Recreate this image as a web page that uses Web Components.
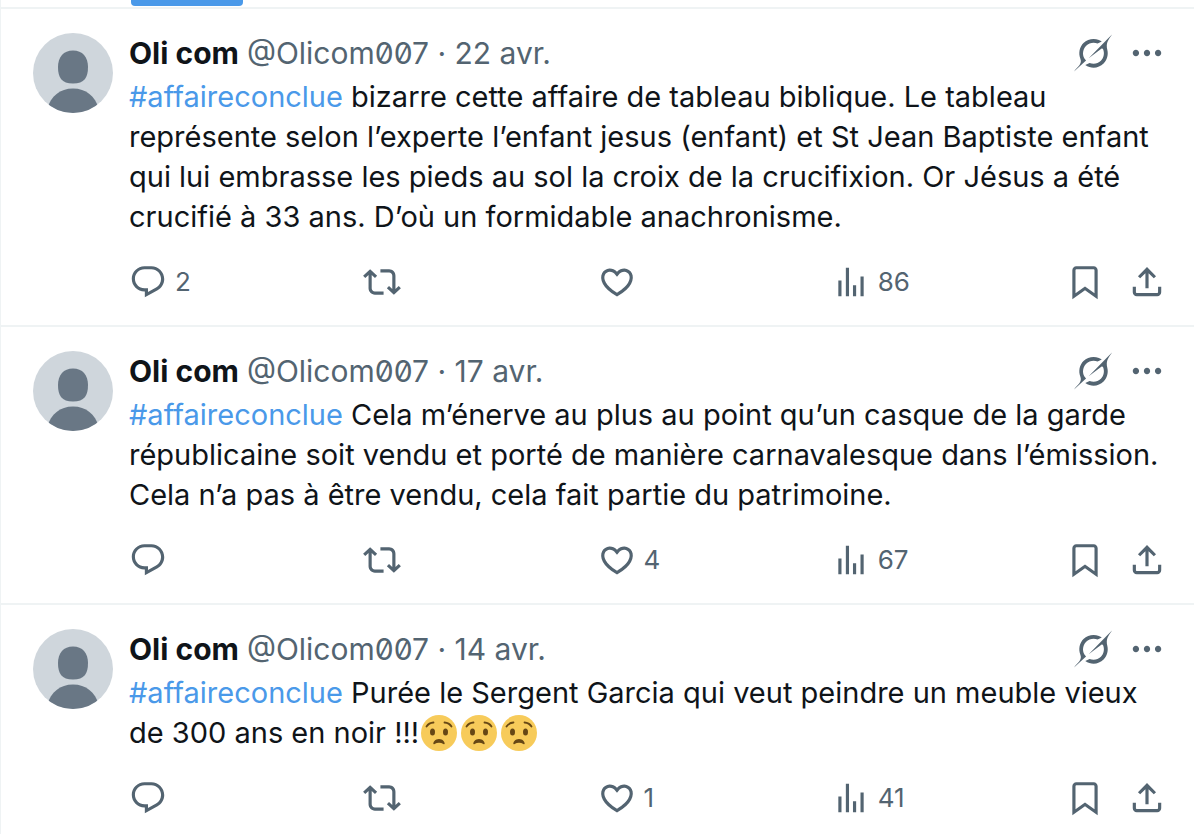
<!DOCTYPE html>
<html lang="fr">
<head>
<meta charset="utf-8">
<meta name="viewport" content="width=device-width, initial-scale=1">
<title>#affaireconclue</title>
<style>
  body {
    margin: 0;
    background: #fff;
    color: #0f1419;
    font-family: Inter, "Noto Sans", sans-serif;
    overflow: hidden;
  }
</style>
</head>
<body>
<post-timeline>
  <post-item name="Oli com" handle="Olicom007" date="22 avr." replies="2" views="86">
    <hash-tag tag="affaireconclue"></hash-tag> bizarre cette affaire de tableau biblique. Le tableau représente selon l’experte l’enfant jesus (enfant) et St Jean Baptiste enfant qui lui embrasse les pieds au sol la croix de la crucifixion. Or Jésus a été crucifié à 33 ans. D’où un formidable anachronisme.
  </post-item>
  <post-item name="Oli com" handle="Olicom007" date="17 avr." likes="4" views="67">
    <hash-tag tag="affaireconclue"></hash-tag> Cela m’énerve au plus au point qu’un casque de la garde républicaine soit vendu et porté de manière carnavalesque dans l’émission. Cela n’a pas à être vendu, cela fait partie du patrimoine.
  </post-item>
  <post-item name="Oli com" handle="Olicom007" date="14 avr." likes="1" views="41">
    <hash-tag tag="affaireconclue"></hash-tag> Purée le Sergent Garcia qui veut peindre un meuble vieux de 300 ans en noir !!!<worried-face></worried-face><worried-face></worried-face><worried-face></worried-face>
  </post-item>
</post-timeline>

<script>
const ICONS = {
  reply: 'M1.751 10c0-4.42 3.584-8 8.005-8h4.366c4.49 0 8.129 3.64 8.129 8.13 0 2.96-1.607 5.68-4.196 7.11l-8.054 4.46v-3.69h-.067c-4.49.1-8.183-3.51-8.183-8.01zm8.005-6c-3.317 0-6.005 2.69-6.005 6 0 3.37 2.77 6.08 6.138 6.01l.351-.01h1.761v2.3l5.087-2.81c1.951-1.08 3.163-3.13 3.163-5.36 0-3.39-2.744-6.13-6.129-6.13H9.756z',
  repost: 'M4.5 3.88l4.432 4.14-1.364 1.46L5.5 7.55V16c0 1.1.896 2 2 2H13v2H7.5c-2.209 0-4-1.79-4-4V7.55L1.432 9.48.068 8.02 4.5 3.88zM16.5 6H11V4h5.5c2.209 0 4 1.79 4 4v8.45l2.068-1.93 1.364 1.46-4.432 4.14-4.432-4.14 1.364-1.46 2.068 1.93V8c0-1.1-.896-2-2-2z',
  like: 'M16.697 5.5c-1.222-.06-2.679.51-3.89 2.16l-.805 1.09-.806-1.09C9.984 6.01 8.526 5.44 7.304 5.5c-1.243.07-2.349.78-2.91 1.91-.552 1.12-.633 2.78.479 4.82 1.074 1.97 3.257 4.27 7.129 6.61 3.87-2.34 6.052-4.64 7.126-6.61 1.111-2.04 1.03-3.7.477-4.82-.561-1.13-1.666-1.84-2.908-1.91zm4.187 7.69c-1.351 2.48-4.001 5.12-8.379 7.67l-.503.3-.504-.3c-4.379-2.55-7.029-5.19-8.382-7.67-1.36-2.5-1.41-4.86-.514-6.67.887-1.79 2.647-2.91 4.601-3.01 1.651-.09 3.368.56 4.798 2.01 1.429-1.45 3.146-2.1 4.796-2.01 1.954.1 3.714 1.22 4.601 3.01.896 1.81.846 4.17-.514 6.67z',
  views: 'M8.75 21V3h2v18h-2zM18 21V8.5h2V21h-2zM4 21l.004-10h2L6 21H4zm9.248 0v-7h2v7h-2z',
  bookmark: 'M4 4.5C4 3.12 5.119 2 6.5 2h11C18.881 2 20 3.12 20 4.5v18.44l-8-5.71-8 5.71V4.5zM6.5 4c-.276 0-.5.22-.5.5v14.56l6-4.29 6 4.29V4.5c0-.28-.224-.5-.5-.5h-11z',
  share: 'M12 2.59l5.7 5.7-1.41 1.42L13 6.41V16h-2V6.41l-3.3 3.3-1.41-1.42L12 2.59zM21 15l-.02 3.51c0 1.38-1.12 2.49-2.5 2.49H5.5C4.11 21 3 19.88 3 18.5V15h2v3.5c0 .28.22.5.5.5h12.98c.28 0 .5-.22.5-.5L19 15h2z',
  more: 'M3 12c0-1.1.9-2 2-2s2 .9 2 2-.9 2-2 2-2-.9-2-2zm9 2c1.1 0 2-.9 2-2s-.9-2-2-2-2 .9-2 2 .9 2 2 2zm7 0c1.1 0 2-.9 2-2s-.9-2-2-2-2 .9-2 2 .9 2 2 2z',
  grok: 'M12.745 20.54l10.97-8.19c.539-.4 1.307-.244 1.564.38 1.349 3.288.746 7.241-1.938 9.955-2.683 2.714-6.417 3.31-9.83 1.954l-3.728 1.745c5.347 3.697 11.84 2.782 15.898-1.324 3.219-3.255 4.216-7.692 3.284-11.693l.008.009c-1.351-5.878.332-8.227 3.782-13.031L33 0l-4.54 4.59v-.014L12.743 20.544m-2.263 1.987c-3.837-3.707-3.175-9.446.1-12.755 2.42-2.449 6.388-3.448 9.852-1.979l3.72-1.737c-.67-.49-1.53-1.017-2.515-1.387-4.455-1.854-9.789-.931-13.41 2.728-3.483 3.523-4.579 8.94-2.697 13.561 1.405 3.454-.899 5.898-3.22 8.364C1.49 30.2.666 31.074 0 32l10.478-9.466'
};

// Button with an icon and an optional counter
class IconButton extends HTMLElement {
  constructor() {
    super();
    this.attachShadow({ mode: 'open' });
  }

  connectedCallback() {
    const icon = this.getAttribute('icon');
    const count = this.getAttribute('count') || '';
    const box = icon === 'grok' ? '0 0 33 32' : '0 0 24 24';

    this.shadowRoot.innerHTML = `
      <style>
        :host {
          display: block;
        }

        button {
          display: flex;
          align-items: center;
          gap: 8px;
          height: 40px;
          padding: 0;
          border: 0;
          background: none;
          color: #536471;
          font-family: inherit;
          font-size: 26px;
          line-height: 32px;
          cursor: pointer;
        }

        button:hover {
          color: #1d9bf0;
        }

        svg {
          display: block;
          width: 38px;
          height: 38px;
          fill: currentColor;
        }
      </style>
      <button type="button" aria-label="${this.getAttribute('label')} ${count}">
        <svg viewBox="${box}" aria-hidden="true"><path d="${ICONS[icon]}"/></svg>
        ${count ? `<span>${count}</span>` : ''}
      </button>
    `;
  }
}

class UserAvatar extends HTMLElement {
  constructor() {
    super();
    this.attachShadow({ mode: 'open' });
    this.shadowRoot.innerHTML = `
      <style>
        :host {
          display: block;
          flex: none;
          width: 80px;
          height: 80px;
          border-radius: 50%;
          overflow: hidden;
          background: #cfd6dc;
        }

        svg {
          display: block;
          fill: #697785;
        }
      </style>
      <svg width="80" height="80" viewBox="0 0 80 80" aria-hidden="true">
        <path d="M40 17.500c9.500 0 15 6.500 15 16.500 0 10.500-3.500 16.500-15 16.500S25 44.500 25 34c0-10 5.500-16.500 15-16.500z"/>
        <path d="M14 76c4-13 13-20.500 26-20.500S62 63 66 76v6H14z"/>
      </svg>
    `;
  }
}

class HashTag extends HTMLElement {
  constructor() {
    super();
    this.attachShadow({ mode: 'open' });
  }

  connectedCallback() {
    const tag = this.getAttribute('tag');

    this.shadowRoot.innerHTML = `
      <style>
        :host {
          display: inline;
        }

        a {
          color: #4a99e9;
          text-decoration: none;
        }

        a:hover {
          text-decoration: underline;
        }
      </style>
      <a href="#${tag}">#${tag}</a>`;
  }
}

class WorriedFace extends HTMLElement {
  constructor() {
    super();
    this.attachShadow({ mode: 'open' });
    this.shadowRoot.innerHTML = `
      <style>
        :host {
          display: inline-block;
          width: 36px;
          height: 36px;
          margin: 0 2px;
          vertical-align: -8px;
        }

        svg {
          display: block;
        }
      </style>
      <svg width="36" height="36" viewBox="0 0 36 36" role="img" aria-label="😟">
        <circle cx="18" cy="18" r="18" fill="#f7cb5a"/>
        <g fill="#664715">
          <ellipse cx="11.500" cy="17" rx="2.500" ry="3.500"/>
          <ellipse cx="24.500" cy="17" rx="2.500" ry="3.500"/>
          <path d="M18 24c-4 0-5.700 3-5.700 4.600 0 .7.700.8 1.300.4 2.700-1.600 6.100-1.600 8.800 0 .6.400 1.300.3 1.300-.4C23.700 27 22 24 18 24z"/>
        </g>
        <path d="M5.500 11.500c1.500-2.300 4-3.800 7-4M30.500 11.500c-1.500-2.300-4-3.800-7-4" fill="none" stroke="#664715" stroke-width="1.800" stroke-linecap="round"/>
      </svg>
    `;
  }
}

class PostItem extends HTMLElement {
  constructor() {
    super();
    this.attachShadow({ mode: 'open' });
  }

  connectedCallback() {
    this.render();
  }

  count(name) {
    return this.getAttribute(name) || '';
  }

  render() {
    this.shadowRoot.innerHTML = `
      <style>
        :host {
          display: block;
          border-bottom: 2px solid #eff3f4;
        }

        article {
          display: flex;
          gap: 16px;
          padding: 24px 28px 23px 32px;
        }

        .content {
          flex: 1;
          min-width: 0;
        }

        header {
          display: flex;
          align-items: center;
          gap: 8px;
          height: 40px;
          margin-bottom: 4px;
          font-size: 30px;
          line-height: 40px;
          color: #536471;
        }

        header a {
          color: inherit;
          text-decoration: none;
        }

        header .name {
          font-weight: 700;
          color: #0f1419;
        }

        .handle {
          font-feature-settings: "zero";
        }

        .tools {
          display: flex;
          gap: 16px;
          margin-left: auto;
        }

        .text {
          margin: 0;
          font-size: 29px;
          line-height: 40px;
        }

        .actions {
          display: flex;
          margin-top: 25px;
        }

        .actions .wide {
          flex: 1;
        }

        .saves {
          display: flex;
          gap: 24px;
        }
      </style>
      <article>
        <user-avatar></user-avatar>
        <div class="content">
          <header>
            <a class="name" href="#profil">${this.getAttribute('name')}</a>
            <span><a class="handle" href="#profil">@${this.getAttribute('handle')}</a> · <a href="#post"><time>${this.getAttribute('date')}</time></a></span>
            <div class="tools">
              <icon-button icon="grok" label="Grok"></icon-button>
              <icon-button icon="more" label="Plus"></icon-button>
            </div>
          </header>
          <p class="text"><slot></slot></p>
          <div class="actions">
            <icon-button class="wide" icon="reply" label="Répondre" count="${this.count('replies')}"></icon-button>
            <icon-button class="wide" icon="repost" label="Reposter" count="${this.count('reposts')}"></icon-button>
            <icon-button class="wide" icon="like" label="J’aime" count="${this.count('likes')}"></icon-button>
            <icon-button class="wide" icon="views" label="Vues" count="${this.count('views')}"></icon-button>
            <div class="saves">
              <icon-button icon="bookmark" label="Signet"></icon-button>
              <icon-button icon="share" label="Partager"></icon-button>
            </div>
          </div>
        </div>
      </article>
    `;
  }
}

// Column with the bottom edge of the tab bar and the list of posts
class PostTimeline extends HTMLElement {
  constructor() {
    super();
    this.attachShadow({ mode: 'open' });
    this.shadowRoot.innerHTML = `
      <style>
        :host {
          display: block;
          border-left: 1px solid #eff3f4;
        }

        .tabs {
          height: 7px;
          padding-left: 130px;
          border-bottom: 2px solid #eff3f4;
        }

        .active {
          width: 112px;
          height: 6px;
          border-radius: 0 0 4px 4px;
          background: #4a99e9;
        }
      </style>
      <div class="tabs"><div class="active"></div></div>
      <slot></slot>
    `;
  }
}

customElements.define('icon-button', IconButton);
customElements.define('user-avatar', UserAvatar);
customElements.define('hash-tag', HashTag);
customElements.define('worried-face', WorriedFace);
customElements.define('post-item', PostItem);
customElements.define('post-timeline', PostTimeline);
</script>
</body>
</html>
